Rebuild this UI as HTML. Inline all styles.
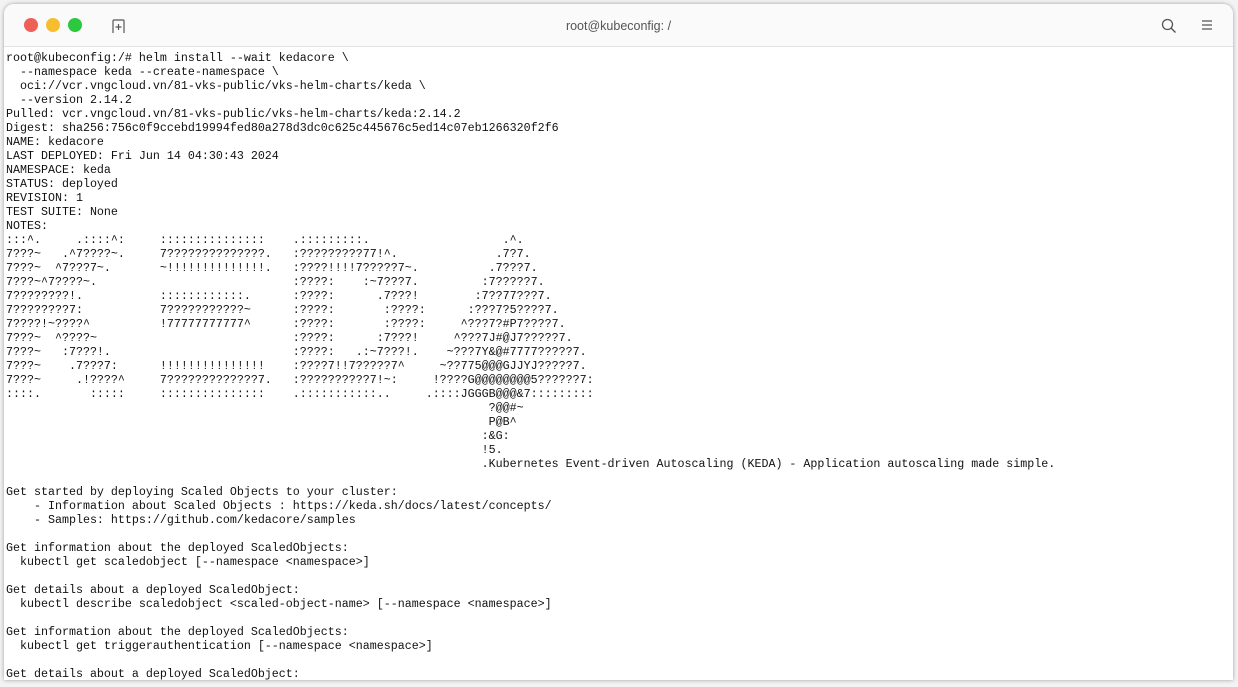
<!DOCTYPE html>
<html><head><meta charset="utf-8"><style>
html,body{margin:0;padding:0;width:1238px;height:687px;background:#f3f3f3;overflow:hidden}
.win{position:absolute;left:4px;top:4px;width:1229px;height:676px;background:#fff;border-radius:10px 10px 0 0;box-shadow:0 0 4px rgba(0,0,0,.35);overflow:hidden}
.bar{position:absolute;left:0;top:0;right:0;height:42px;background:#fafafa;border-bottom:1px solid #e2e2e2}
.dot{position:absolute;top:14px;width:14px;height:14px;border-radius:50%}
.title{position:absolute;left:0;right:0;top:15px;text-align:center;font:12.5px "Liberation Sans",sans-serif;color:#555}
pre{position:absolute;left:2px;top:47px;margin:0;font:11.67px/14px "Liberation Mono",monospace;color:#111}
</style></head><body>
<div class="win">
<div class="bar">
<div class="dot" style="left:20px;background:#ee5f57"></div>
<div class="dot" style="left:42px;background:#f6be2f"></div>
<div class="dot" style="left:64px;background:#2bc840"></div>
<svg style="position:absolute;left:107px;top:14px" width="16" height="16" viewBox="0 0 16 16"><path d="M2 15V3q0-1 1-1h9q1 0 1 1v12" fill="none" stroke="#555" stroke-width="1.2"/><path d="M7.5 6v6M4.5 9h6" stroke="#555" stroke-width="1.2"/></svg>
<div class="title">root@kubeconfig: /</div>
<svg style="position:absolute;left:1157px;top:14px" width="16" height="16" viewBox="0 0 16 16"><circle cx="6.5" cy="6.5" r="5" fill="none" stroke="#555" stroke-width="1.3"/><path d="M10 10l4.5 4.5" stroke="#555" stroke-width="1.4"/></svg>
<svg style="position:absolute;left:1197px;top:15px" width="12" height="12" viewBox="0 0 12 12"><path d="M1 2h10M1 6h10M1 10h10" stroke="#555" stroke-width="1.2"/></svg>
</div>
<pre>root@kubeconfig:/# helm install --wait kedacore \
  --namespace keda --create-namespace \
  oci://vcr.vngcloud.vn/81-vks-public/vks-helm-charts/keda \
  --version 2.14.2
Pulled: vcr.vngcloud.vn/81-vks-public/vks-helm-charts/keda:2.14.2
Digest: sha256:756c0f9ccebd19994fed80a278d3dc0c625c445676c5ed14c07eb1266320f2f6
NAME: kedacore
LAST DEPLOYED: Fri Jun 14 04:30:43 2024
NAMESPACE: keda
STATUS: deployed
REVISION: 1
TEST SUITE: None
NOTES:
:::^.     .::::^:     :::::::::::::::    .:::::::::.                   .^.
7???~   .^7????~.     7??????????????.   :?????????77!^.              .7?7.
7???~  ^7???7~.       ~!!!!!!!!!!!!!!.   :????!!!!7?????7~.          .7???7.
7???~^7????~.                            :????:    :~7???7.         :7?????7.
7????????!.           ::::::::::::.      :????:      .7???!        :7??77???7.
7????????7:           7???????????~      :????:       :????:      :???7?5????7.
7????!~????^          !77777777777^      :????:       :????:     ^???7?#P7????7.
7???~  ^????~                            :????:      :7???!     ^???7J#@J7?????7.
7???~   :7???!.                          :????:   .:~7???!.    ~???7Y&amp;@#7777?????7.
7???~    .7???7:      !!!!!!!!!!!!!!!    :????7!!7?????7^     ~??775@@@GJJYJ?????7.
7???~     .!????^     7?????????????7.   :??????????7!~:     !????G@@@@@@@@5??????7:
::::.       :::::     :::::::::::::::    .:::::::::::..     .::::JGGGB@@@&amp;7:::::::::
                                                                     ?@@#~
                                                                     P@B^
                                                                    :&amp;G:
                                                                    !5.
                                                                    .Kubernetes Event-driven Autoscaling (KEDA) - Application autoscaling made simple.

Get started by deploying Scaled Objects to your cluster:
    - Information about Scaled Objects : https://keda.sh/docs/latest/concepts/
    - Samples: https://github.com/kedacore/samples

Get information about the deployed ScaledObjects:
  kubectl get scaledobject [--namespace &lt;namespace&gt;]

Get details about a deployed ScaledObject:
  kubectl describe scaledobject &lt;scaled-object-name&gt; [--namespace &lt;namespace&gt;]

Get information about the deployed ScaledObjects:
  kubectl get triggerauthentication [--namespace &lt;namespace&gt;]

Get details about a deployed ScaledObject:</pre>
</div>
</body></html>
